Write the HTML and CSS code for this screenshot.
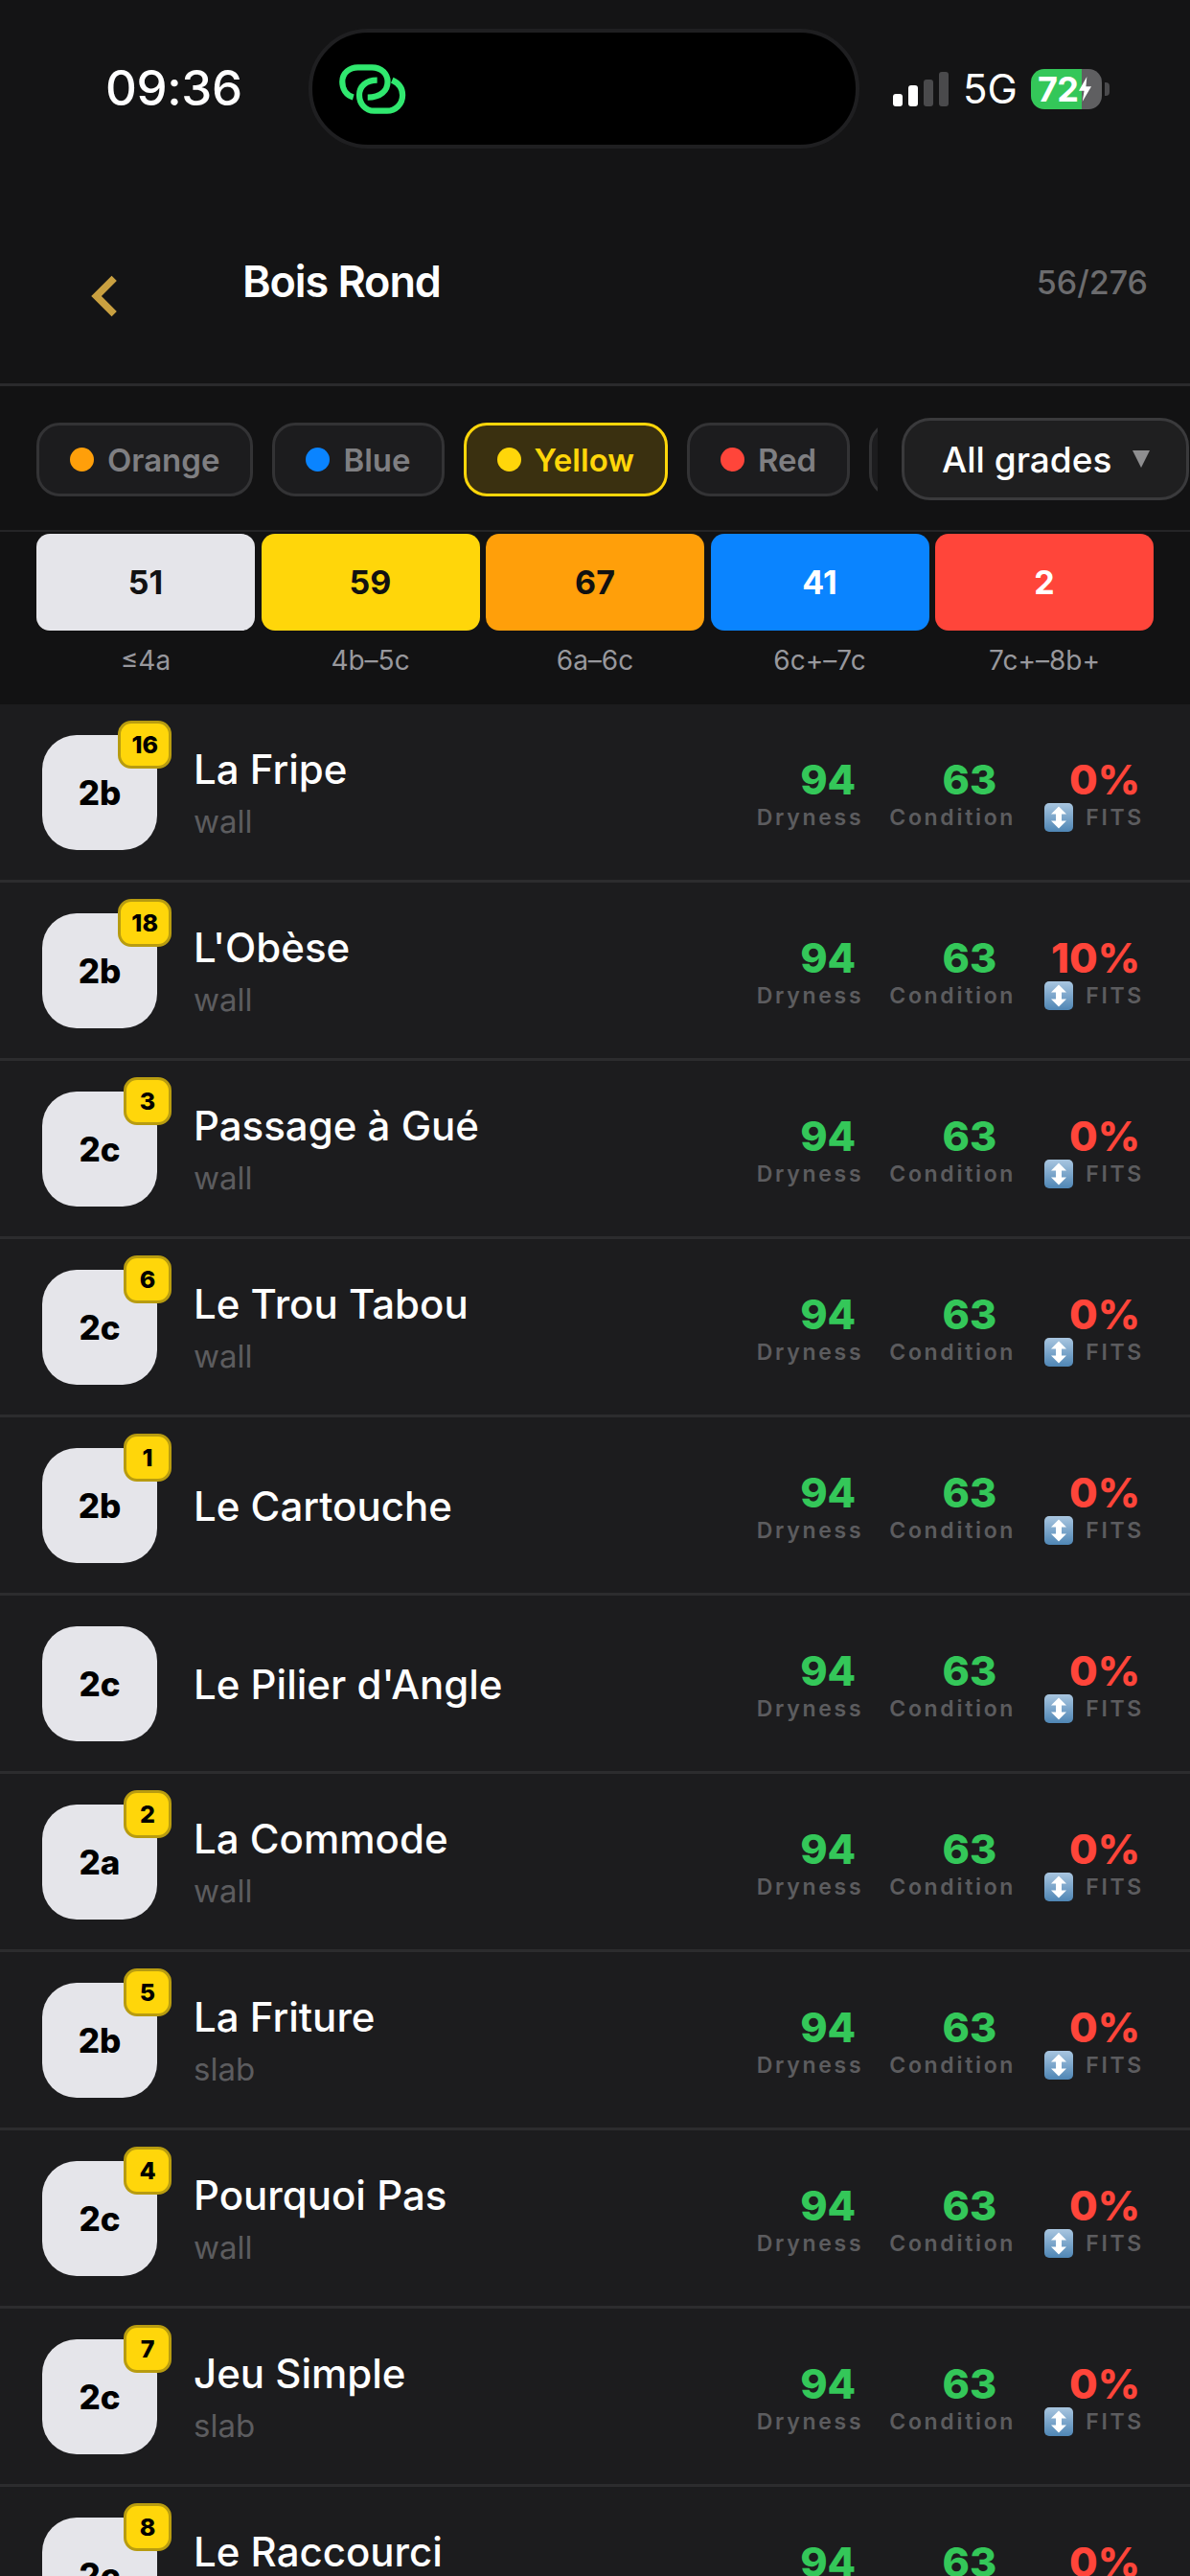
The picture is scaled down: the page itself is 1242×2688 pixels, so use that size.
FILE: index.html
```html
<!DOCTYPE html>
<html lang="en">
<head>
<meta charset="utf-8">
<title>Bois Rond</title>
<link rel="stylesheet" href="styles.css">
</head>
<body>
<svg class="defs" width="0" height="0" aria-hidden="true">
  <defs>
    <linearGradient id="emojiBlue" x1="0" y1="0" x2="0" y2="1">
      <stop offset="0" stop-color="#a9c6e0"/>
      <stop offset="1" stop-color="#4f86b5"/>
    </linearGradient>
    <symbol id="updown" viewBox="0 0 30 30">
      <rect x="0" y="0" width="30" height="30" rx="5" fill="url(#emojiBlue)"/>
      <path d="M15 3.5 L23 11.5 H18 V18.5 H23 L15 26.5 L7 18.5 H12 V11.5 H7 Z" fill="#fff"/>
    </symbol>
  </defs>
</svg>
<div class="app">
  <header class="top">
    <div class="status">
      <span class="time">09:36</span>
      <div class="island">
        <svg class="link-icon" viewBox="120 130 230 180" fill="none" stroke="#30e86f" stroke-width="20" stroke-linecap="butt">
          <path d="M170 247 C145 240 133 218 133 195 C133 165 158 147 185 147 H232 C265 147 285 170 285 195 C285 225 262 248 218 248"/>
          <path d="M300 190 C322 200 335 218 335 240 C335 272 310 293 283 293 H240 C210 293 190 268 190 240 C190 212 212 190 250 190"/>
        </svg>
      </div>
      <div class="status-right">
        <div class="signal">
          <i class="bar b1"></i><i class="bar b2"></i><i class="bar b3"></i><i class="bar b4"></i>
        </div>
        <span class="net">5G</span>
        <div class="battery">
          <span class="batt-num">72</span>
          <svg class="bolt" viewBox="0 0 16 28"><path d="M10 0 L1 16 H7 L5 28 L15 11 H9 Z" fill="#fff"/></svg>
        </div>
        <i class="batt-nub"></i>
      </div>
    </div>
    <div class="nav">
      <svg class="back" viewBox="0 0 30 44" fill="none" stroke="#c9a040" stroke-width="8"><path d="M27 2 L7 22 L27 42" stroke-linejoin="miter"/></svg>
      <h1 class="title">Bois Rond</h1>
      <span class="counter">56/276</span>
    </div>
  </header>

  <section class="filters">
    <div class="chips">
      <div class="chip"><i class="dot orange"></i>Orange</div>
      <div class="chip"><i class="dot blue"></i>Blue</div>
      <div class="chip active"><i class="dot yellow"></i>Yellow</div>
      <div class="chip"><i class="dot red"></i>Red</div>
      <div class="chip chip-cut"></div>
    </div>
    <div class="dropdown"><span>All grades</span><i class="caret"></i></div>
  </section>

  <section class="grades">
    <div class="grade-col"><div class="grade-bar g-white">51</div><div class="grade-label">≤4a</div></div>
    <div class="grade-col"><div class="grade-bar g-yellow">59</div><div class="grade-label">4b–5c</div></div>
    <div class="grade-col"><div class="grade-bar g-orange">67</div><div class="grade-label">6a–6c</div></div>
    <div class="grade-col"><div class="grade-bar g-blue">41</div><div class="grade-label">6c+–7c</div></div>
    <div class="grade-col"><div class="grade-bar g-red">2</div><div class="grade-label">7c+–8b+</div></div>
  </section>

  <main class="list">
    <article class="row">
      <div class="grade-box">2b<span class="count">16</span></div>
      <div class="info"><div class="name">La Fripe</div><div class="kind">wall</div></div>
      <div class="metrics">
        <div class="metric m1"><div class="val green">94</div><div class="lab">Dryness</div></div>
        <div class="metric m2"><div class="val green">63</div><div class="lab">Condition</div></div>
        <div class="metric m3"><div class="val red-t">0%</div><div class="lab"><svg class="emoji"><use href="#updown"/></svg>FITS</div></div>
      </div>
    </article>
    <article class="row">
      <div class="grade-box">2b<span class="count">18</span></div>
      <div class="info"><div class="name">L'Obèse</div><div class="kind">wall</div></div>
      <div class="metrics">
        <div class="metric m1"><div class="val green">94</div><div class="lab">Dryness</div></div>
        <div class="metric m2"><div class="val green">63</div><div class="lab">Condition</div></div>
        <div class="metric m3"><div class="val red-t">10%</div><div class="lab"><svg class="emoji"><use href="#updown"/></svg>FITS</div></div>
      </div>
    </article>
    <article class="row">
      <div class="grade-box">2c<span class="count">3</span></div>
      <div class="info"><div class="name">Passage à Gué</div><div class="kind">wall</div></div>
      <div class="metrics">
        <div class="metric m1"><div class="val green">94</div><div class="lab">Dryness</div></div>
        <div class="metric m2"><div class="val green">63</div><div class="lab">Condition</div></div>
        <div class="metric m3"><div class="val red-t">0%</div><div class="lab"><svg class="emoji"><use href="#updown"/></svg>FITS</div></div>
      </div>
    </article>
    <article class="row">
      <div class="grade-box">2c<span class="count">6</span></div>
      <div class="info"><div class="name">Le Trou Tabou</div><div class="kind">wall</div></div>
      <div class="metrics">
        <div class="metric m1"><div class="val green">94</div><div class="lab">Dryness</div></div>
        <div class="metric m2"><div class="val green">63</div><div class="lab">Condition</div></div>
        <div class="metric m3"><div class="val red-t">0%</div><div class="lab"><svg class="emoji"><use href="#updown"/></svg>FITS</div></div>
      </div>
    </article>
    <article class="row">
      <div class="grade-box">2b<span class="count">1</span></div>
      <div class="info"><div class="name">Le Cartouche</div></div>
      <div class="metrics">
        <div class="metric m1"><div class="val green">94</div><div class="lab">Dryness</div></div>
        <div class="metric m2"><div class="val green">63</div><div class="lab">Condition</div></div>
        <div class="metric m3"><div class="val red-t">0%</div><div class="lab"><svg class="emoji"><use href="#updown"/></svg>FITS</div></div>
      </div>
    </article>
    <article class="row">
      <div class="grade-box">2c</div>
      <div class="info"><div class="name">Le Pilier d'Angle</div></div>
      <div class="metrics">
        <div class="metric m1"><div class="val green">94</div><div class="lab">Dryness</div></div>
        <div class="metric m2"><div class="val green">63</div><div class="lab">Condition</div></div>
        <div class="metric m3"><div class="val red-t">0%</div><div class="lab"><svg class="emoji"><use href="#updown"/></svg>FITS</div></div>
      </div>
    </article>
    <article class="row">
      <div class="grade-box">2a<span class="count">2</span></div>
      <div class="info"><div class="name">La Commode</div><div class="kind">wall</div></div>
      <div class="metrics">
        <div class="metric m1"><div class="val green">94</div><div class="lab">Dryness</div></div>
        <div class="metric m2"><div class="val green">63</div><div class="lab">Condition</div></div>
        <div class="metric m3"><div class="val red-t">0%</div><div class="lab"><svg class="emoji"><use href="#updown"/></svg>FITS</div></div>
      </div>
    </article>
    <article class="row">
      <div class="grade-box">2b<span class="count">5</span></div>
      <div class="info"><div class="name">La Friture</div><div class="kind">slab</div></div>
      <div class="metrics">
        <div class="metric m1"><div class="val green">94</div><div class="lab">Dryness</div></div>
        <div class="metric m2"><div class="val green">63</div><div class="lab">Condition</div></div>
        <div class="metric m3"><div class="val red-t">0%</div><div class="lab"><svg class="emoji"><use href="#updown"/></svg>FITS</div></div>
      </div>
    </article>
    <article class="row">
      <div class="grade-box">2c<span class="count">4</span></div>
      <div class="info"><div class="name">Pourquoi Pas</div><div class="kind">wall</div></div>
      <div class="metrics">
        <div class="metric m1"><div class="val green">94</div><div class="lab">Dryness</div></div>
        <div class="metric m2"><div class="val green">63</div><div class="lab">Condition</div></div>
        <div class="metric m3"><div class="val red-t">0%</div><div class="lab"><svg class="emoji"><use href="#updown"/></svg>FITS</div></div>
      </div>
    </article>
    <article class="row">
      <div class="grade-box">2c<span class="count">7</span></div>
      <div class="info"><div class="name">Jeu Simple</div><div class="kind">slab</div></div>
      <div class="metrics">
        <div class="metric m1"><div class="val green">94</div><div class="lab">Dryness</div></div>
        <div class="metric m2"><div class="val green">63</div><div class="lab">Condition</div></div>
        <div class="metric m3"><div class="val red-t">0%</div><div class="lab"><svg class="emoji"><use href="#updown"/></svg>FITS</div></div>
      </div>
    </article>
    <article class="row">
      <div class="grade-box">2c<span class="count">8</span></div>
      <div class="info"><div class="name">Le Raccourci</div><div class="kind">wall</div></div>
      <div class="metrics">
        <div class="metric m1"><div class="val green">94</div><div class="lab">Dryness</div></div>
        <div class="metric m2"><div class="val green">63</div><div class="lab">Condition</div></div>
        <div class="metric m3"><div class="val red-t">0%</div><div class="lab"><svg class="emoji"><use href="#updown"/></svg>FITS</div></div>
      </div>
    </article>
  </main>
</div>
</body>
</html>
```

FILE: styles.css
```css
* { box-sizing: border-box; }
html, body { margin: 0; padding: 0; width: 1242px; height: 2688px; overflow: hidden; background: #141415; }
body { font-family: Inter, "Liberation Sans", sans-serif; color: #fff; }
i { display: block; font-style: normal; }
.defs { position: absolute; }
.app { width: 1242px; height: 2688px; overflow: hidden; display: flex; flex-direction: column; }

/* Header */
.top { height: 403px; border-bottom: 3px solid #2a2a2c; background: #141415; flex: none; }
.status { height: 185px; padding: 30px 0 0 110px; display: flex; align-items: flex-start; }
.time { width: 212px; margin-top: 37px; font-size: 51px; line-height: 50px; font-weight: 500; letter-spacing: -0.4px; }
.island { width: 575px; height: 125px; background: #000; border: 4px solid #1f1f21; border-radius: 62px; padding: 31px 0 0 27px; flex: none; }
.link-icon { display: block; width: 72px; height: 56px; }
.status-right { display: flex; align-items: center; margin-left: 35px; height: 42px; margin-top: 42px; }
.signal { display: flex; align-items: flex-end; gap: 6px; height: 36px; }
.bar { width: 10px; border-radius: 3px; }
.b1 { height: 13px; background: #fff; }
.b2 { height: 22px; background: #fff; }
.b3 { height: 28px; background: #4a4a4c; }
.b4 { height: 36px; background: #4a4a4c; }
.net { margin-left: 15px; font-size: 42px; line-height: 42px; font-weight: 400; width: 71px; }
.battery { position: relative; width: 74px; height: 42px; border-radius: 14px; background: linear-gradient(90deg, #34c759 0 53px, #5f5f61 53px); display: flex; align-items: center; padding-left: 7px; }
.batt-num { font-size: 36px; line-height: 42px; font-weight: 700; letter-spacing: -0.8px; }
.bolt { width: 15px; height: 26px; margin-left: 0; flex: none; }
.batt-nub { width: 5px; height: 14px; margin-left: 3px; background: #4a4a4c; border-radius: 0 4px 4px 0; }
.nav { display: flex; align-items: flex-start; padding: 0 44px 0 94px; position: relative; }
.back { width: 28px; height: 44px; margin-top: 102px; flex: none; }
.title { margin: 81px 0 0 131px; font-size: 45px; line-height: 56px; font-weight: 600; letter-spacing: -1.1px; flex: 1; }
.counter { margin-top: 88px; font-size: 34px; line-height: 44px; font-weight: 500; color: #6c6c6e; }

/* Filters */
.filters { height: 152px; flex: none; padding: 33px 0 0 38px; display: flex; align-items: flex-start; border-bottom: 2px solid #252527; background: #121213; }
.chips { width: 878px; height: 86px; padding-top: 5px; display: flex; gap: 20px; overflow: hidden; flex: none; }
.chip { height: 77px; flex: none; display: flex; align-items: center; gap: 14px; padding: 0 32px; border: 3px solid #333335; border-radius: 24px; background: #1c1c1e; font-size: 33px; font-weight: 600; color: #7f7f82; }
.chip.active { border-color: #ffd60a; background: #3a3010; color: #ffd60a; }
.chip-cut { width: 100px; }
.dot { width: 25px; height: 25px; border-radius: 50%; }
.dot.orange { background: #ff9f0a; }
.dot.blue { background: #0a84ff; }
.dot.yellow { background: #ffd60a; }
.dot.red { background: #ff453a; }
.dropdown { width: 300px; height: 86px; margin-left: 25px; flex: none; border: 3px solid #3a3a3c; border-radius: 30px; background: #1f1f20; display: flex; align-items: center; padding-left: 39px; font-size: 37px; font-weight: 500; }
.caret { width: 0; height: 0; margin: 0 0 0 22px; border-left: 9px solid transparent; border-right: 9px solid transparent; border-top: 18px solid #8e8e90; }

/* Grade bars */
.grades { height: 180px; flex: none; padding: 2px 38px 0; display: grid; grid-template-columns: repeat(5, 1fr); gap: 6.5px; background: #121213; }
.grade-bar { height: 101px; border-radius: 14px; display: flex; align-items: center; justify-content: center; font-size: 34px; font-weight: 700; color: #111; }
.grade-label { margin-top: 14px; text-align: center; font-size: 28px; line-height: 34px; color: #98989d; }
.g-white { background: #e5e5ea; }
.g-yellow { background: #ffd60a; }
.g-orange { background: #ff9f0a; }
.g-blue { background: #0a84ff; color: #fff; }
.g-red { background: #ff453a; color: #fff; }

/* List */
.list { flex: none; }
.row { height: 186px; border-bottom: 3px solid #2c2c2e; background: #1c1c1e; padding: 0 0 0 44px; display: flex; align-items: center; }
.grade-box { position: relative; width: 120px; height: 120px; flex: none; border-radius: 36px; background: #e5e5ea; color: #000; display: flex; align-items: center; justify-content: center; font-size: 35px; font-weight: 800; }
.count { position: absolute; top: -15px; right: -15px; min-width: 50px; height: 50px; padding: 0 11px; border: 3px solid #b89c10; border-radius: 14px; background: #ffd60a; color: #000; font-size: 25px; font-weight: 800; display: flex; align-items: center; justify-content: center; }
.info { margin-left: 38px; flex: 1; display: flex; flex-direction: column; gap: 10px; padding-top: 2px; }
.name { font-size: 42px; line-height: 48px; font-weight: 500; color: #fff; }
.kind { font-size: 33px; line-height: 40px; color: #5c5c5f; }
.metrics { display: flex; align-self: flex-start; padding: 53px 48px 0 0; }
.metric { display: flex; flex-direction: column; align-items: flex-end; }
.m2 { margin-left: 27px; }
.m3 { margin-left: 30px; }
.val { font-size: 43px; line-height: 50px; font-weight: 800; }
.m1 .val { margin-right: 8px; }
.m2 .val { margin-right: 20px; }
.m3 .val { margin-right: 4px; }
.green { color: #34c759; }
.red-t { color: #ff453a; }
.lab { display: flex; align-items: center; font-size: 23px; line-height: 30px; font-weight: 600; letter-spacing: 2.7px; color: #5c5c5f; }
.emoji { width: 30px; height: 30px; margin-right: 13px; flex: none; }
```
